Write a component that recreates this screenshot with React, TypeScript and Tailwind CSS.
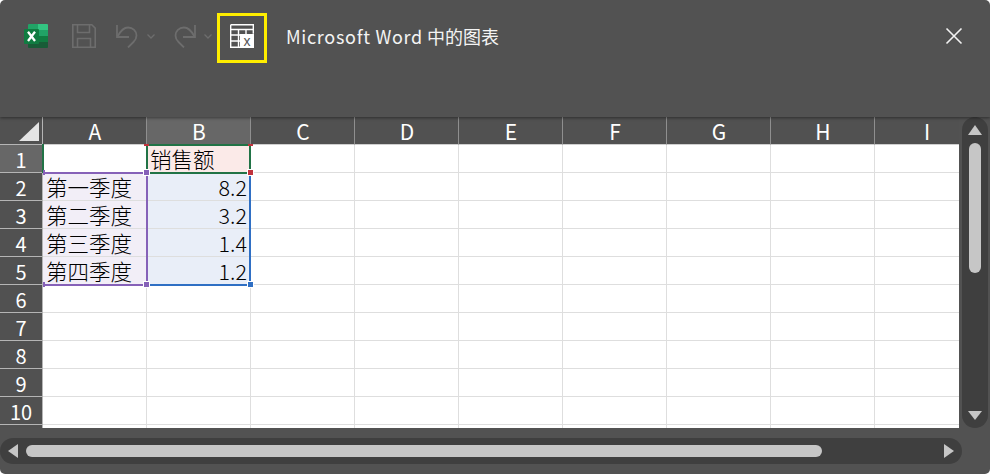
import React from 'react';

const columns = ['A', 'B', 'C', 'D', 'E', 'F', 'G', 'H', 'I'];
const rows = [1, 2, 3, 4, 5, 6, 7, 8, 9, 10, 11];

const cells: Record<string, { text: string; right?: boolean; bg: string }> = {
  B1: { text: '销售额', bg: 'bg-[#fbeae8]' },
  A2: { text: '第一季度', bg: 'bg-[#f2eef7]' },
  A3: { text: '第二季度', bg: 'bg-[#f2eef7]' },
  A4: { text: '第三季度', bg: 'bg-[#f2eef7]' },
  A5: { text: '第四季度', bg: 'bg-[#f2eef7]' },
  B2: { text: '8.2', right: true, bg: 'bg-[#e9eef8]' },
  B3: { text: '3.2', right: true, bg: 'bg-[#e9eef8]' },
  B4: { text: '1.4', right: true, bg: 'bg-[#e9eef8]' },
  B5: { text: '1.2', right: true, bg: 'bg-[#e9eef8]' },
};

const ExcelLogo = () => (
  <svg width="24" height="24" viewBox="0 0 24 24">
    <path d="M5 0h9v6H4V1a1 1 0 0 1 1-1z" fill="#21a366" />
    <path d="M14 0h9a1 1 0 0 1 1 1v5H14z" fill="#33c481" />
    <rect x="4" y="6" width="10" height="6" fill="#107c41" />
    <rect x="14" y="6" width="10" height="6" fill="#21a366" />
    <rect x="4" y="12" width="10" height="6" fill="#185c37" />
    <rect x="14" y="12" width="10" height="6" fill="#107c41" />
    <path d="M4 18h20v5a1 1 0 0 1-1 1H5a1 1 0 0 1-1-1z" fill="#185c37" />
    <rect x="0" y="5" width="15" height="15" rx="1" fill="#107c41" />
    <path d="M4 7.800l7 9.200M11 7.800l-7 9.200" stroke="#fff" strokeWidth="2.300" fill="none" />
  </svg>
);

const SaveIcon = () => (
  <svg width="24" height="24" viewBox="0 0 24 24" fill="none" stroke="#6d6d6d" strokeWidth="1.6">
    <path d="M.8.8h19l3.4 3.4v19H.8z" />
    <path d="M5.5 1v7.5h12V1M5.5 23v-8.5h13V23" />
  </svg>
);

const UndoIcon = ({ flip }: { flip?: boolean }) => (
  <svg width="22" height="24" viewBox="0 0 22 24" fill="none" stroke="#6d6d6d" strokeWidth="1.8" className={flip ? '-scale-x-100' : ''}>
    <path d="M1 1v12h12" />
    <path d="M1.500 12.500C5 6 8 3.500 12 3.500c5 0 8.500 3.500 8.500 8 0 2.600-1 4.500-3 6.500L12 23.500" />
  </svg>
);

const Chevron = () => (
  <svg width="8" height="5" viewBox="0 0 8 5" fill="none" stroke="#6d6d6d" strokeWidth="1.3">
    <path d="M.5.5L4 4 7.500.5" />
  </svg>
);

const ChartDataIcon = () => (
  <svg width="24" height="24" viewBox="0 0 24 24" fill="none" stroke="#fff" strokeWidth="1.400">
    <path d="M.7.7h22.600v9M.7.7v22.600h9.500" />
    <path d="M.7 5.500h22.600M.7 11h10M.7 17h10M8.500 5.500v18M16 5.500v5" />
    <rect x="10" y="10" width="14" height="14" fill="#fff" stroke="none" />
    <text x="17" y="22" textAnchor="middle" fontSize="14" fontFamily="Liberation Sans, sans-serif" fill="#555" stroke="none">x</text>
  </svg>
);

const Line = ({ className }: { className: string }) => <div className={`absolute ${className}`} />;

const Handle = ({ className }: { className: string }) => (
  <div className={`absolute h-[7px] w-[7px] border border-white ${className}`} />
);

const Sheet = () => (
  <div className="relative w-[959px] overflow-hidden">
    <div className="grid grid-cols-[43px_repeat(9,104px)] grid-rows-[28px_repeat(11,28px)]">
      <div className="relative border-b border-r border-[#b5b5b5] bg-[#515151]">
        <div className="absolute bottom-[3px] right-[3px] h-0 w-0 border-b-[19px] border-l-[20px] border-b-[#e4e4e4] border-l-transparent" />
      </div>
      {columns.map((c) => (
        <div
          key={c}
          className={`flex items-center justify-center border-b border-r border-b-[#cfcfcf] border-r-[#8f8f8f] pl-[1px] pt-[2px] text-[21px] leading-none text-white ${
            c === 'B' ? 'bg-[#676767]' : 'bg-[#515151]'
          }`}
        >
          {c}
        </div>
      ))}
      {rows.map((r) => (
        <React.Fragment key={r}>
          <div
            className={`flex items-center justify-center border-b border-r border-[#b5b5b5] pt-[2px] text-[20px] leading-none text-white ${
              r === 1 ? 'bg-[#676767]' : 'bg-[#515151]'
            }`}
          >
            {r <= 10 ? r : null}
          </div>
          {columns.map((c) => {
            const cell = cells[`${c}${r}`];
            return (
              <div
                key={c}
                className={`flex items-center whitespace-nowrap border-b border-r border-[#dedede] pt-[1px] text-[21.5px] font-light leading-none text-black ${
                  cell ? cell.bg : 'bg-white'
                } ${cell?.right ? 'justify-end pr-[3px]' : 'pl-[3px]'}`}
              >
                {cell?.text}
              </div>
            );
          })}
        </React.Fragment>
      ))}
    </div>

    {/* chart data range markers */}
    <Line className="left-[42px] top-[27px] h-[29px] w-[2px] bg-[#217346]" />
    <Line className="left-[146px] top-[27px] h-[28px] w-[2px] bg-[#217346]" />
    <Line className="left-[249px] top-[27px] h-[28px] w-[2px] bg-[#217346]" />
    <Line className="left-[146px] top-[27px] h-[2px] w-[105px] bg-[#217346]" />
    <Line className="left-[146px] top-[55px] h-[2px] w-[105px] bg-[#217346]" />
    <Line className="left-[44px] top-[55px] h-[2px] w-[103px] bg-[#8661b8]" />
    <Line className="left-[146px] top-[55px] h-[114px] w-[2px] bg-[#8661b8]" />
    <Line className="left-[44px] top-[167px] h-[2px] w-[103px] bg-[#8661b8]" />
    <Line className="left-[249px] top-[56px] h-[113px] w-[2px] bg-[#2f6fc4]" />
    <Line className="left-[149px] top-[167px] h-[2px] w-[101px] bg-[#2f6fc4]" />
    <Line className="left-[144px] top-[27px] h-[2px] w-[5px] bg-[#c0323c]" />
    <Line className="left-[248px] top-[27px] h-[2px] w-[5px] bg-[#c0323c]" />
    <Handle className="left-[247px] top-[52px] bg-[#c0323c]" />
    <Handle className="left-[143px] top-[52px] bg-[#8661b8]" />
    <Handle className="left-[143px] top-[164px] bg-[#8661b8]" />
    <Line className="left-[43px] top-[53px] h-[5px] w-[2px] bg-[#8661b8]" />
    <Line className="left-[43px] top-[165px] h-[5px] w-[2px] bg-[#8661b8]" />
    <Handle className="left-[247px] top-[164px] bg-[#2f6fc4]" />
  </div>
);

export default function App() {
  return (
    <div className="flex h-[474px] w-[990px] flex-col overflow-hidden rounded-[5px] bg-[#525252] font-['Noto_Sans_CJK_SC','Liberation_Sans',sans-serif]">
      <div className="relative z-10 h-[117px] shrink-0 shadow-[0_1px_3px_rgba(0,0,0,0.45)]">
        <div className="flex h-[72px] items-center pl-[24px]">
          <ExcelLogo />
          <div className="ml-[24px]"><SaveIcon /></div>
          <div className="ml-[20px]"><UndoIcon /></div>
          <div className="ml-[9px]"><Chevron /></div>
          <div className="ml-[19px]"><UndoIcon flip /></div>
          <div className="ml-[8px]"><Chevron /></div>
          <div className="ml-[5px] mt-[4px] flex h-[50px] w-[50px] items-center justify-center border-[3px] border-[#ffee00] pb-[4px]">
            <ChartDataIcon />
          </div>
          <div className="ml-[19px] text-[18px] text-[#f4f4f4]">
            <span className="tracking-[0.7px]">Microsoft Word</span> 中的图表
          </div>
          <svg width="18" height="18" viewBox="0 0 18 18" stroke="#f2f2f2" strokeWidth="1.6" className="ml-auto mr-[27px]">
            <path d="M1.500 1.500l15 15M16.500 1.500l-15 15" />
          </svg>
        </div>
      </div>

      <div className="flex h-[311px] shrink-0">
        <Sheet />
        <div className="ml-[3px] flex w-[26px] flex-col items-center rounded-[13px] bg-[#3f3f3f] pt-[8px]">
          <div className="h-0 w-0 border-b-[10px] border-l-[7px] border-r-[7px] border-b-[#c6c6c6] border-l-transparent border-r-transparent" />
          <div className="mt-[8px] h-[130px] w-[12px] rounded-[6px] bg-[#c6c6c6]" />
          <div className="mt-auto mb-[8px] h-0 w-0 border-l-[7px] border-r-[7px] border-t-[9px] border-l-transparent border-r-transparent border-t-[#c6c6c6]" />
        </div>
      </div>

      <div className="mt-[10px] flex h-[26px] w-[962px] shrink-0 items-center rounded-[13px] bg-[#3f3f3f] pl-[8px] pr-[8px]">
        <div className="h-0 w-0 border-b-[7px] border-r-[10px] border-t-[7px] border-b-transparent border-r-[#c6c6c6] border-t-transparent" />
        <div className="ml-[8px] h-[12px] w-[796px] rounded-[6px] bg-[#c6c6c6]" />
        <div className="ml-auto h-0 w-0 border-b-[7px] border-l-[10px] border-t-[7px] border-b-transparent border-l-[#c6c6c6] border-t-transparent" />
      </div>
    </div>
  );
}
